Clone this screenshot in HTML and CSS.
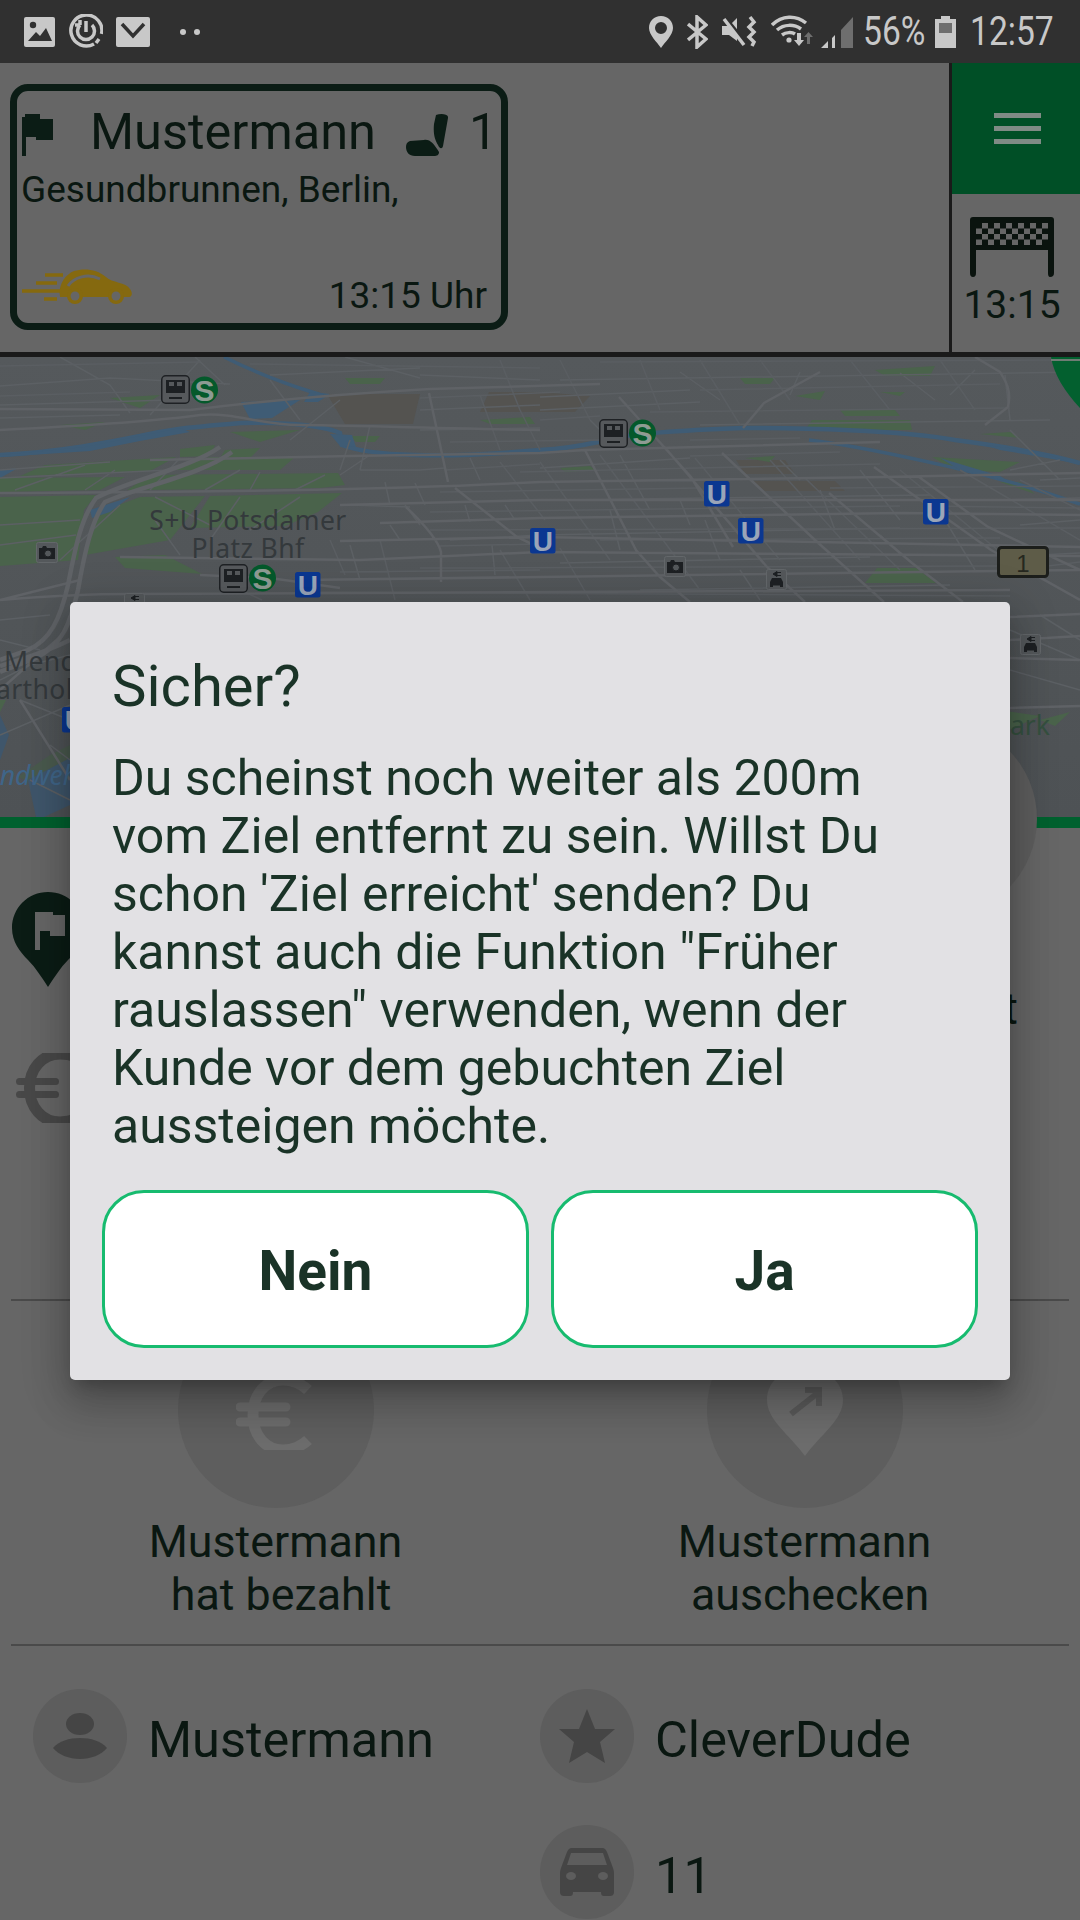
FILE: index.html
```html
<!DOCTYPE html>
<html lang="de">
<head>
<meta charset="utf-8">
<title>Sicher?</title>
<link rel="stylesheet" href="styles.css">
</head>
<body>
<div class="app">
  <div class="statusbar">
    <div class="status-left">
      <svg class="si" width="32" height="31" viewBox="0 0 32 31"><rect width="31" height="30" y="1" rx="2" class="f-status"/><circle cx="9" cy="9" r="3.2" class="f-bar"/><path d="M4 25 L12 16 L16 20 L22 12 L28 25 Z" class="f-bar"/></svg>
      <svg class="si" width="34" height="35" viewBox="0 0 34 35"><path d="M25 30 A15.500 15.500 0 1 1 32.500 20" class="s-status w3 nofill"/><path d="M30 25 L27 29" class="s-status w3"/><path d="M11 11 A8.500 8.500 0 1 0 23 11" class="s-status w3 nofill"/><path d="M17 7 V18 M11 11 H6 M11 11 V6" class="s-status w3"/></svg>
      <svg class="si" width="34" height="31" viewBox="0 0 34 31"><rect width="34" height="30" y="1" rx="2" class="f-status"/><path d="M6 8 L17 20 L28 8" class="s-bar w3"/></svg>
      <div class="dots"><i></i><i></i></div>
    </div>
    <div class="status-right">
      <svg width="24" height="32" viewBox="0 0 24 32"><path fill-rule="evenodd" d="M12 0 C5 0 0 5 0 12 C0 19 8 26 12 32 C16 26 24 19 24 12 C24 5 19 0 12 0 Z M12 6 A6 6 0 1 1 12 18 A6 6 0 1 1 12 6 Z" class="f-status"/></svg>
      <svg width="21" height="34" viewBox="0 0 21 34"><path d="M1 9 L19 24 L10 32 V2 L19 10 L1 25" class="s-status w3 nofill"/></svg>
      <svg width="35" height="33" viewBox="0 0 35 33"><path d="M0 11 H7 L15 3 V26 L7 20 H0 Z" class="f-status"/><path d="M2 1 L24 28" class="s-bar w3"/><path d="M2 4 L22 30" class="s-status w3"/><path d="M28 2 L32 7 L27 12 L32 17 L27 22 L32 27 L30 31" class="s-status w3 nofill"/></svg>
      <svg class="wifi" width="44" height="33" viewBox="0 0 44 33"><path d="M1 10 C11 0 25 0 35 8 M6 15 C13 9 23 9 30 14 M11 20 C15 17 21 17 24 19" class="s-status w3 nofill"/><circle cx="18" cy="25" r="2.6" class="f-status"/><path d="M26 18 H30 V25 H33 L28 31 L23 25 H26 Z" class="f-status"/><path d="M36 20 H39 V29 H36 Z M37.5 17 L42 22 H33 Z" class="f-dimicon"/></svg>
      <svg class="signal" width="32" height="32" viewBox="0 0 32 32"><path d="M0 32 L7 25 V32 Z M11 22 L14 19 V32 H11 Z" class="f-status"/><path d="M20 14 L32 1 V32 H20 Z" class="f-dimicon"/></svg>
      <span class="status-text pct">56%</span>
      <svg width="21" height="32" viewBox="0 0 21 32"><path fill-rule="evenodd" d="M6 0 H15 V3 H21 V32 H0 V3 H6 Z M4 7 V17 H17 V7 Z" class="f-status"/><rect x="4" y="7" width="13" height="10" class="f-dimicon"/></svg>
      <span class="status-text clock">12:57</span>
    </div>
  </div>

  <header class="topbar">
    <section class="card">
      <div class="card-head">
        <svg class="flag" width="32" height="42" viewBox="0 0 32 42"><path d="M0 3 H3 V0 H18 V5 H31 V26 H14 V23 H4 V42 H0 Z" class="f-ink"/></svg>
        <span class="card-name">Mustermann</span>
        <svg class="seat" width="42" height="42" viewBox="0 0 42 42"><path d="M30 1 C35 -1 43 0 42 4 L37 32 C36 36 33 34 32 31 C29 26 27 20 28 10 Z" class="f-ink"/><path d="M4 27 L18 26 C24 25 28 30 33 38 C33 41 31 42 28 42 H9 C3 42 0 38 0 33 C0 30 1 28 4 27 Z" class="f-ink"/></svg>
        <span class="card-count">1</span>
      </div>
      <div class="card-address">Gesundbrunnen, Berlin,</div>
      <div class="card-foot">
        <svg width="110" height="36" viewBox="0 0 110 36"><path d="M23 6 H41 M14 14 H35 M0 22 H38 M22 30 H35" class="s-gold w3 nofill"/><path d="M38 27 C36 18 42 6 52 2 C62 -1 75 0 84 8 C90 14 104 13 108 20 C111 24 110 28 107 28 H38 Z" class="f-gold"/><path d="M46 17 C52 8 66 4 78 10" class="s-paint nofill"/><circle cx="53" cy="27" r="8" class="f-gold"/><circle cx="53" cy="27" r="4.500" class="f-card"/><circle cx="94" cy="27" r="8" class="f-gold"/><circle cx="94" cy="27" r="4.500" class="f-card"/></svg>
        <span class="card-time">13:15 Uhr</span>
      </div>
    </section>
    <aside class="side">
      <div class="menu"><i></i><i></i><i></i></div>
      <div class="finish">
        <svg width="84" height="60" viewBox="0 0 84 60"><path d="M3 0 H81 Q84 0 84 3 V56 Q84 60 80 60 Q78 60 78 56 V33 H6 V56 Q6 60 3 60 Q0 60 0 56 V3 Q0 0 3 0 Z" class="f-ink-dark"/><path d="M6 6 H78 V28 H6 Z" class="f-card"/><path d="M6 6h6v5.5h-6z M18 6h6v5.500h-6z M30 6h6v5.500h-6z M42 6h6v5.500h-6z M54 6h6v5.500h-6z M66 6h6v5.500h-6z M12 11.500h6v5.500h-6z M24 11.500h6v5.500h-6z M36 11.500h6v5.500h-6z M48 11.500h6v5.500h-6z M60 11.500h6v5.500h-6z M72 11.500h6v5.500h-6z M6 17h6v5.500h-6z M18 17h6v5.500h-6z M30 17h6v5.500h-6z M42 17h6v5.500h-6z M54 17h6v5.500h-6z M66 17h6v5.500h-6z M12 22.500h6v5.500h-6z M24 22.500h6v5.500h-6z M36 22.500h6v5.500h-6z M48 22.500h6v5.500h-6z M60 22.500h6v5.500h-6z M72 22.500h6v5.500h-6z" class="f-ink-dark"/></svg>
        <span class="finish-time">13:15</span>
      </div>
    </aside>
  </header>

  <div class="map">
    <svg width="1080" height="460" viewBox="0 357 1080 460">
      <defs>
        <linearGradient id="mapshade" x1="0" y1="0" x2="0" y2="1"><stop offset="0" stop-color="#55595c"/><stop offset="1" stop-color="#4e5255"/></linearGradient>
      </defs>
      <rect x="0" y="357" width="1080" height="460" fill="url(#mapshade)"/>
      <!-- built-up tint -->
      <path d="M327 394 H420 L413 424 H345 Z M489 392 H540 L590 396 L575 412 H480 Z M736 460 H785 L795 474 H745 Z M753 481 H835 L845 491 H765 Z" class="m-tint"/>
      <!-- parks -->
      <path d="M45 465 L176 457 L150 471 L20 476 Z M170 470 L210 457 L295 457 L280 470 Z M0 478 L125 477 L100 490 L0 492 Z M0 497 L96 495 L84 510 L78 560 L0 566 Z M127 490 L150 475 L338 473 L345 485 L320 488 L135 490 Z M210 496 L342 493 L318 512 L285 526 L190 528 Z M100 512 L140 497 L205 496 L170 540 L85 555 Z M115 557 L165 555 L202 574 L125 568 Z M180 449 L215 445 L210 456 L180 457 Z M225 450 L260 448 L250 458 L220 458 Z M230 432 L300 430 L260 442 Z M350 436 L380 436 L375 442 L356 442 Z M345 378 L385 378 L380 384 L350 384 Z M110 398 L160 395 L140 408 Z M60 425 L105 422 L85 430 Z M480 420 L530 417 L535 424 L490 424 Z M740 378 L775 378 L770 384 L745 384 Z M795 396 L825 391 L820 400 Z M812 420 L910 420 L912 430 L805 430 Z M840 410 L895 410 L900 416 L845 416 Z M880 392 L905 392 L900 396 Z M875 370 L935 366 L930 376 L885 376 Z M745 458 L775 456 L770 462 Z M560 468 L590 466 L595 470 L565 472 Z M932 457 L1020 462 L1000 472 L955 470 Z M980 434 L1010 432 L1020 438 Z M1000 482 L1020 482 L1035 494 Z M877 568 L916 568 L936 583 L865 583 Z M1040 720 L1070 712 L1055 726 Z M985 708 L1040 716 L1000 734 Z M0 700 L6 700 L0 712 Z" class="m-park"/>
      <path d="M18 777 L50 755 L70 745 V760 L38 785 Z" class="m-park-soft"/>
      <!-- water -->
      <path d="M0 455 C60 452 110 442 140 436 C165 430 180 428 241 423 C275 422 320 424 340 433 L342 445 C370 456 440 459 540 450 C560 449 580 446 598 442 C625 433 690 430 743 428 C800 428 900 430 955 440 C1000 446 1045 453 1080 463" class="m-water"/>
      <path d="M0 455 L85 447 L140 436 L180 428 L190 432 L140 441 L90 451 L0 457 Z M330 434 L352 435 L356 447 L340 446 Z" class="m-water-fill"/>
      <path d="M809 440 C860 446 920 460 955 468 C990 476 1040 490 1080 504" class="m-water-thin"/>
      <path d="M940 458 L1000 476 L1010 482 L960 470 Z M985 445 L1040 452 L1070 462 L1000 450 Z" class="m-water-fill"/>
      <path d="M224 357 C250 370 280 382 312 392 L325 396" class="m-water-thin"/>
      <path d="M241 402 L300 400 L272 418 L250 419 Z M310 392 L330 394 L318 402 L304 402 Z M90 510 L130 497 L110 512 L92 518 Z M0 470 L18 468 L0 478 Z" class="m-water-fill"/>
      <path d="M0 715 L9 735 L0 760 Z M28 780 L70 758 V805 L44 817 H36 Z" class="m-water-fill soft"/>
      <!-- minor roads -->
      <path d="M0 386 L110 378 L230 384 M60 357 L110 385 L130 413 M0 405 L170 400 M195 357 L225 385 M0 418 L120 415 M270 375 L420 368 M420 375 L540 380 M345 357 L420 378 M0 470 L110 462 M0 478 L170 470 M15 490 L85 465 M85 490 L115 470 M150 490 L180 458 M205 490 L240 470 M250 490 L260 472 M295 490 L325 475 M155 497 L210 525 M240 497 L210 540 M300 497 L250 530 M120 505 L60 560 M155 520 L180 555 M270 380 L300 420 M200 360 L150 415 M340 400 L290 440 M340 470 L350 440 M370 425 L360 470 M420 410 L540 405 M420 430 L540 428 M0 525 L80 520 M0 545 L76 535 M350 505 L410 507 M360 470 L420 470 L445 468 M370 455 L340 475 M470 458 L480 480 M405 505 L420 525 M385 482 L390 505 M415 483 L425 505 M465 505 L470 522 M350 545 L360 580 M390 525 L400 540 M450 540 L540 535 M505 505 L515 520 M492 545 L495 575 M540 397 L690 390 M560 380 L1080 372 M540 410 L700 402 M540 468 L690 458 M700 425 L1050 420 M560 500 L930 495 M540 535 L900 528 M560 563 L870 557 M640 590 L950 585 M590 420 L605 435 M620 455 L650 510 M610 510 L620 550 M680 500 L690 525 M705 520 L720 560 M740 570 L760 600 M820 490 L835 530 M860 470 L900 520 M780 460 L800 480 M880 535 L920 570 M945 520 L975 570 M680 372 L720 400 M800 372 L790 395 M900 373 L935 400 M1005 375 L1010 420 M1010 430 L1060 480 M1000 500 L1080 498 M1020 525 L1080 520 M1040 555 L1080 553 M975 370 L950 395 M1010 470 L1060 460 M1040 480 L1080 478 M1010 630 L1080 660 M1010 670 L1080 690 M1040 615 L1080 640 M0 620 L50 615 M0 640 L40 650 M0 680 L30 665 L70 655 M20 700 L70 720 M0 735 L70 705 M50 745 L70 760 M30 780 L70 800" class="m-road-thin"/>
      <path d="M0 366 L200 362 M250 364 L540 368 M600 362 L1050 360 M0 396 L130 392 M420 398 L560 392 M700 390 L1000 384 M540 420 L600 416 M650 412 L1010 408 M450 442 L600 440 M690 440 L800 438 M445 470 L540 464 M690 456 L840 452 M520 472 L880 464 M440 492 L700 488 M830 488 L1080 486 M430 512 L900 506 M930 506 L1080 508 M430 530 L1080 528 M440 546 L540 544 M600 540 L1000 538 M420 568 L1000 566 M340 572 L540 570 M1000 572 L1080 562 M300 592 L1010 596 M500 360 L520 410 M560 360 L590 420 M640 360 L660 410 M700 360 L740 425 M760 360 L790 400 M850 360 L890 410 M940 360 L975 410 M480 395 L500 450 M520 410 L540 450 M500 462 L545 520 M540 462 L610 560 M600 455 L700 590 M695 458 L780 560 M770 460 L860 560 M805 478 L900 570 M900 470 L1010 560 M960 470 L1080 540 M1020 480 L1080 510 M560 548 L590 600 M500 550 L530 600 M380 540 L395 600 M330 540 L345 575 M240 590 L262 600" class="m-road-faint"/>
      <!-- main roads -->
      <path d="M0 430 C80 426 150 422 200 415 C235 412 260 425 300 425 C340 425 420 428 540 430 M0 409 L190 410 C230 405 320 395 430 389 L600 384 M0 493 C130 492 350 492 540 482 L884 477 L1080 473 M150 460 L350 456 L540 453 L585 450 L880 442 M340 505 L540 500 L1080 500 M380 523 L540 518 L900 513 L1080 515 M340 541 L540 537 L1080 547 M120 557 L360 560 L540 552 L1080 556 M300 580 L540 577 L1080 570 M0 600 C50 596 100 594 130 594 L1010 590 M1010 617 L1080 614 M1010 640 L1080 636 M1010 658 L1080 660 M1010 708 L1080 706 M429 393 L448 482 M406 507 C425 525 438 540 441 552 L441 582 M455 488 L517 537 L540 548 M619 397 L691 477 L733 547 M585 450 L636 550 L660 577 L690 602 M667 450 L767 567 L805 602 M722 453 L815 540 L884 602 M829 493 L912 563 L963 602 M874 467 L991 550 L1080 600 M919 477 L988 527 L1080 570 M743 428 L764 403 L820 372 M1008 407 C1012 390 1005 380 1000 372 L975 357 M1008 407 L985 425 M200 575 L270 578 L340 588 M0 600 L80 580 M60 637 L0 690 M20 700 L70 780" class="m-road"/>
      <path d="M220 447 C190 468 130 480 96 498 C80 520 75 550 68 585 C60 620 50 640 28 650 L0 660 M232 452 C200 476 140 486 105 502 C92 520 85 550 78 590 C70 625 62 645 36 658 L0 672 M0 666 C20 660 50 650 70 640" class="m-road-main"/>
      <path d="M1072 357 L1080 370" class="m-road"/>
      <!-- labels -->
      <text x="248" y="530" class="m-label" text-anchor="middle">S+U Potsdamer</text>
      <text x="248" y="558" class="m-label" text-anchor="middle">Platz Bhf</text>
      <text x="4" y="671" class="m-label">Mend</text>
      <text x="-4" y="699" class="m-label">arthol</text>
      <text x="1010" y="735" class="m-label-park">ark</text>
      <text x="-28" y="785" class="m-label-water">Landwehr</text>
      <!-- stations -->
      <g transform="translate(161 375)"><rect x=".75" y=".75" width="27.500" height="27.500" rx="4" class="m-station"/><path d="M5 5 H24 V18 H5 Z" class="m-glyph"/><path d="M8 7 H13 V11 H8 Z M16 7 H21 V11 H16 Z" class="m-station-f"/><path d="M8 22 H21 V24 H8 Z" class="m-glyph"/></g>
      <g transform="translate(219 564)"><rect x=".75" y=".75" width="27.500" height="27.500" rx="4" class="m-station"/><path d="M5 5 H24 V18 H5 Z" class="m-glyph"/><path d="M8 7 H13 V11 H8 Z M16 7 H21 V11 H16 Z" class="m-station-f"/><path d="M8 22 H21 V24 H8 Z" class="m-glyph"/></g>
      <g transform="translate(599 419)"><rect x=".75" y=".75" width="27.500" height="27.500" rx="4" class="m-station"/><path d="M5 5 H24 V18 H5 Z" class="m-glyph"/><path d="M8 7 H13 V11 H8 Z M16 7 H21 V11 H16 Z" class="m-station-f"/><path d="M8 22 H21 V24 H8 Z" class="m-glyph"/></g>
      <g><circle cx="204.500" cy="390" r="13.500" class="m-s"/><text x="204.500" y="400.500" class="m-s-t" text-anchor="middle">S</text></g>
      <g><circle cx="262.500" cy="578" r="13.500" class="m-s"/><text x="262.500" y="588.500" class="m-s-t" text-anchor="middle">S</text></g>
      <g><circle cx="642.500" cy="433" r="13.500" class="m-s"/><text x="642.500" y="443.500" class="m-s-t" text-anchor="middle">S</text></g>
      <!-- U -->
      <g class="u" transform="translate(295 572)"><rect width="25.500" height="25.500" rx="2.500" class="m-u"/><text x="12.750" y="23" class="m-u-t" text-anchor="middle">U</text></g>
      <g class="u" transform="translate(704 481)"><rect width="25.500" height="25.500" rx="2.500" class="m-u"/><text x="12.750" y="23" class="m-u-t" text-anchor="middle">U</text></g>
      <g class="u" transform="translate(738 518)"><rect width="25.500" height="25.500" rx="2.500" class="m-u"/><text x="12.750" y="23" class="m-u-t" text-anchor="middle">U</text></g>
      <g class="u" transform="translate(923 499)"><rect width="25.500" height="25.500" rx="2.500" class="m-u"/><text x="12.750" y="23" class="m-u-t" text-anchor="middle">U</text></g>
      <g class="u" transform="translate(530 528)"><rect width="25.500" height="25.500" rx="2.500" class="m-u"/><text x="12.750" y="23" class="m-u-t" text-anchor="middle">U</text></g>
      <g class="u" transform="translate(62 707)"><rect width="25.500" height="25.500" rx="2.500" class="m-u"/><text x="12.750" y="23" class="m-u-t" text-anchor="middle">U</text></g>
      <!-- cameras -->
      <g transform="translate(36 542)"><rect x=".5" y=".5" width="21" height="20" rx="2" class="m-poi"/><path d="M3 6 H6 L7 4 H10 L11 6 H19 V17 H3 Z" class="m-glyph"/><circle cx="12" cy="11.500" r="3.500" class="m-poi-hole"/></g>
      <g transform="translate(664 556)"><rect x=".5" y=".5" width="21" height="20" rx="2" class="m-poi"/><path d="M3 6 H6 L7 4 H10 L11 6 H19 V17 H3 Z" class="m-glyph"/><circle cx="12" cy="11.500" r="3.500" class="m-poi-hole"/></g>
      <!-- chargers -->
      <g transform="translate(766 569)"><rect x=".5" y=".5" width="20" height="20" rx="2" class="m-poi"/><path d="M7 5 L11 2.500 V7.500 Z M11 3.500 H15 M11 6.500 H15" class="m-glyph-line"/><path d="M6 9 H15 L17 13 V18 H14 V16.500 H7 V18 H4 V13 Z" class="m-glyph"/></g>
      <g transform="translate(1020 634)"><rect x=".5" y=".5" width="20" height="20" rx="2" class="m-poi"/><path d="M7 5 L11 2.500 V7.500 Z M11 3.500 H15 M11 6.500 H15" class="m-glyph-line"/><path d="M6 9 H15 L17 13 V18 H14 V16.500 H7 V18 H4 V13 Z" class="m-glyph"/></g>
      <g transform="translate(124 593)"><rect x=".5" y=".5" width="20" height="20" rx="2" class="m-poi"/><path d="M7 5 L11 2.500 V7.500 Z M11 3.500 H15 M11 6.500 H15" class="m-glyph-line"/></g>
      <!-- road badge -->
      <g transform="translate(997 546)"><rect x="1.500" y="1.500" width="49" height="29" rx="3" class="m-shield"/><text x="26" y="26" class="m-shield-t" text-anchor="middle">1</text></g>
      <!-- marker at the edge -->
      <path d="M1051 357 H1080 V408 C1065 392 1054 375 1051 357 Z" class="m-marker"/>
      <path d="M1051 360 H1080" class="m-marker-line"/>
    </svg>
  </div>
  <div class="route-bar"></div>

  <main class="content">
    <section class="trip">
      <div class="trip-icons">
        <svg class="trip-pin" width="72" height="95" viewBox="0 0 72 95"><path d="M36 0 C16 0 0 16 0 36 C0 50 8 60 16 68 C24 76 30 86 36 95 C42 86 48 76 56 68 C64 60 72 50 72 36 C72 16 56 0 36 0 Z" class="f-ink"/><path d="M23 20 H41 V23 H53 V44 H38 V39 H28 V58 H23 Z" class="f-body"/></svg>
        <svg class="trip-euro" width="84" height="70" viewBox="0 0 84 70"><path d="M74 12 C66 4 56 1 46 1 C28 1 15.500 16 15.500 35 C15.500 54 28 69 46 69 C56 69 66 66 74 58" class="s-euro nofill"/><path d="M5.500 28.500 H41.500 M5.500 41.500 H41.500" class="s-euro-bar"/></svg>
      </div>
      <span class="trip-label">Ziel erreicht</span>
    </section>

    <section class="actions">
      <div class="action">
        <div class="action-circle">
          <svg class="euro-mark" width="76" height="70" viewBox="0 0 76 70"><path d="M72 10 C66 4 56 0 47 0 C30 0 17 14 17 35 C17 56 30 70 47 70 C56 70 66 66 72 60" class="s-white w11 nofill"/><path d="M4 27 H50 M4 42 H50" class="s-white w9 round"/></svg>
        </div>
        <p class="action-label">Mustermann<br>&nbsp;hat bezahlt</p>
      </div>
      <div class="action">
        <div class="action-circle">
          <svg class="pin-out" width="76" height="90" viewBox="0 0 76 90"><path d="M38 0 C15 0 0 14 0 32 C0 52 22 66 38 88 C54 66 76 52 76 32 C76 14 60 0 38 0 Z" class="f-white"/><path d="M24 46 L52 24 M38 22 H52 V38" class="s-circle w6 nofill"/></svg>
        </div>
        <p class="action-label">Mustermann<br>&nbsp;auschecken</p>
      </div>
    </section>

    <section class="info">
      <div class="info-item">
        <div class="info-circle"><svg width="54" height="46" viewBox="0 0 54 46"><ellipse cx="27" cy="11" rx="14" ry="11" class="f-icon"/><path d="M0 35 C6 28 16 25 27 25 C38 25 48 28 54 35 C48 42 38 46 27 46 C16 46 6 42 0 35 Z" class="f-icon"/></svg></div>
        <span class="info-text">Mustermann</span>
      </div>
      <div class="info-item">
        <div class="info-circle"><svg width="56" height="54" viewBox="0 0 56 54"><path d="M28 0 L36 20 L56 20 L41 33 L46 54 L28 43 L10 54 L15 33 L0 20 L20 20 Z" class="f-icon"/></svg></div>
        <span class="info-text">CleverDude</span>
      </div>
      <div class="info-item info-second">
        <div class="info-circle"><svg width="54" height="48" viewBox="0 0 54 48"><path d="M12 0 H42 C45 0 46 2 47 4 L53 20 C54 23 54 24 54 27 V44 C54 47 52 48 50 48 H44 C42 48 41 47 41 44 H13 C13 47 12 48 10 48 H4 C2 48 0 47 0 44 V27 C0 24 0 23 1 20 L7 4 C8 2 9 0 12 0 Z" class="f-icon"/><path d="M11 5 H43 L47 17 H7 Z" class="f-circle"/><ellipse cx="11" cy="28" rx="5" ry="4" class="f-circle"/><ellipse cx="43" cy="28" rx="5" ry="4" class="f-circle"/></svg></div>
        <span class="info-text">11</span>
      </div>
    </section>
  </main>

  <div class="float-circle"></div>

  <div class="dialog" role="dialog">
    <h1 class="dialog-title">Sicher?</h1>
    <p class="dialog-body">Du scheinst noch weiter als 200m vom Ziel entfernt zu sein. Willst Du schon 'Ziel erreicht' senden? Du kannst auch die Funktion "Früher rauslassen" verwenden, wenn der Kunde vor dem gebuchten Ziel aussteigen möchte.</p>
    <div class="dialog-actions">
      <button class="dialog-btn">Nein</button>
      <button class="dialog-btn">Ja</button>
    </div>
  </div>
</div>
</body>
</html>
```

FILE: styles.css
```css
* { box-sizing: border-box; }
html, body { margin: 0; padding: 0; height: 1920px; overflow: hidden; background: #666; }
body { font-family: Roboto, "Liberation Sans", sans-serif; color: #0a1711; }
p, h1 { margin: 0; font-weight: 400; }

.app { position: relative; width: 1080px; height: 1920px; overflow: hidden; background: #666; }

/* status bar */
.statusbar { height: 63px; background: #303030; display: flex; justify-content: space-between; align-items: center; padding: 0 26px 0 24px; }
.status-left { display: flex; align-items: center; gap: 13px; }
.dots { display: flex; gap: 8px; margin-left: 17px; }
.dots i { width: 6px; height: 6px; border-radius: 50%; background: #c8c8c8; }
.status-right { display: flex; align-items: center; gap: 14px; }
.wifi { margin-right: -8px; }
.signal { margin-right: -4px; }
.status-text { display: block; font-size: 40px; line-height: 63px; color: #c8c8c8; white-space: nowrap; transform: scaleX(.84); transform-origin: left center; }
.pct { width: 58px; }
.clock { width: 84px; }
.f-status { fill: #c8c8c8; }
.f-bar { fill: #303030; }
.f-dimicon { fill: #6e6e6e; }
.s-status { stroke: #c8c8c8; fill: none; }
.s-bar { stroke: #303030; fill: none; }
.w3 { stroke-width: 3.5px; }
.w6 { stroke-width: 6px; }
.w9 { stroke-width: 9px; }
.w11 { stroke-width: 11px; }
.round { stroke-linecap: round; }
.nofill { fill: none; }

/* top bar */
.topbar { height: 294px; display: flex; justify-content: space-between; background: #666; border-bottom: 5px solid #1a1a1a; }
.card { margin: 21px 0 0 10px; width: 498px; height: 246px; border: 7px solid #0b1c15; border-radius: 18px; padding: 12px 12px 5px 5px; display: flex; flex-direction: column; }
.card-head { display: flex; align-items: center; height: 58px; }
.flag { flex: none; margin-top: 5px; }
.card-name { font-size: 50.500px; line-height: 58px; margin-left: 36px; }
.seat { flex: none; margin: 5px 0 0 30px; }
.card-count { font-size: 50.500px; line-height: 58px; margin-left: 21px; }
.card-address { font-size: 37px; line-height: 44px; margin-top: 7px; margin-left: -1px; }
.card-foot { margin-top: auto; display: flex; justify-content: space-between; align-items: flex-start; height: 44px; padding-right: 2px; }
.card-foot svg { margin-top: -5px; }
.card-time { font-size: 37px; line-height: 44px; }
.f-ink { fill: #0b1c15; }
.f-ink-dark { fill: #0a130e; }
.f-gold { fill: #85690f; }
.s-gold { stroke: #85690f; }
.s-paint { stroke: #666; stroke-width: 3px; }
.f-card { fill: #666; }

.side { width: 131px; border-left: 3px solid #1a1a1a; display: flex; flex-direction: column; }
.menu { height: 131px; background: #004f26; display: flex; flex-direction: column; justify-content: center; align-items: flex-end; gap: 8px; padding-right: 39px; }
.menu i { display: block; width: 47px; height: 5px; background: #7f8b85; }
.finish { display: flex; flex-direction: column; align-items: center; padding-top: 23px; padding-right: 8px; }
.finish-time { font-size: 39px; line-height: 48px; margin-top: 4px; }

/* map */
.map { height: 460px; overflow: hidden; background: #4f5458; }
.map svg { display: block; }
.m-tint { fill: #545350; }
.m-park { fill: #4a634b; }
.m-park-soft { fill: #4a5a4e; }
.m-water { fill: none; stroke: #3f5c75; stroke-width: 4.5px; }
.m-water-thin { fill: none; stroke: #3f5c75; stroke-width: 3.5px; }
.m-water-fill { fill: #3f5c75; }
.m-water-fill.soft { fill: #3f566b; }
.m-road-faint { fill: none; stroke: #5a5e62; stroke-width: 1.5px; }
.m-road-thin { fill: none; stroke: #5c6064; stroke-width: 1.5px; }
.m-road { fill: none; stroke: #5f6266; stroke-width: 2.5px; }
.m-road-main { fill: none; stroke: #606367; stroke-width: 4.5px; }
.m-label { font-family: "Noto Sans", sans-serif; font-size: 26.500px; fill: #34393c; letter-spacing: .4px; }
.m-label-park { font-family: "Noto Sans", sans-serif; font-size: 26.500px; fill: #35503f; }
.m-label-water { font-family: "Noto Sans", sans-serif; font-style: italic; font-size: 26.500px; fill: #3f6588; }
.m-station { fill: #56595c; stroke: #1e2124; stroke-width: 1.5px; }
.m-station-f { fill: #56595c; }
.m-glyph { fill: #1d2023; }
.m-glyph-line { fill: #1d2023; stroke: #1d2023; stroke-width: 1px; }
.m-s { fill: #04592b; }
.m-s-t { font-family: "Liberation Sans", sans-serif; font-weight: 700; font-size: 30px; fill: #8e9b93; }
.m-u { fill: #0b3791; }
.m-u-t { font-family: "Liberation Sans", sans-serif; font-weight: 700; font-size: 28px; fill: #9aa5b8; }
.m-poi { fill: #54585b; stroke: #63676a; stroke-width: 1px; }
.m-poi-hole { fill: #54585b; stroke: #1d2023; stroke-width: 1px; }
.m-shield { fill: #5e5c48; stroke: #1c1e1b; stroke-width: 3px; }
.m-shield-t { font-family: "Liberation Sans", sans-serif; font-size: 24px; fill: #26281f; }
.m-marker { fill: #03602f; }
.m-marker-line { stroke: #6f7c74; stroke-width: 2px; }

.route-bar { height: 11px; background: #00612f; }

/* content */
.content { padding: 0 11px; }
.trip { height: 471px; display: flex; justify-content: space-between; padding: 64px 51px 0 1px; }
.trip-icons { display: flex; flex-direction: column; }
.trip-pin { display: block; }
.trip-euro { display: block; margin-top: 66px; margin-left: 2px; }
.f-body { fill: #666; }
.s-euro { stroke: #484848; stroke-width: 11px; }
.s-euro-bar { stroke: #484848; stroke-width: 7px; stroke-linecap: round; fill: none; }
.trip-label { font-size: 44.800px; line-height: 53px; padding-top: 90px; }

.actions { height: 347px; border-top: 2px solid #4a4a4a; border-bottom: 2px solid #4a4a4a; display: grid; grid-template-columns: 1fr 1fr; padding-top: 11px; }
.action { display: flex; flex-direction: column; align-items: center; }
.action-circle { width: 196px; height: 196px; border-radius: 50%; background: #5e5e5e; display: flex; align-items: center; justify-content: center; }
.action-label { font-size: 44.800px; line-height: 53px; text-align: center; margin-top: 7px; }
.euro-mark { margin: 10px 4px 0 0; }
.pin-out { margin-top: 6px; }
.f-white { fill: #6c6c6c; }
.s-white { stroke: #6c6c6c; }
.s-circle { stroke: #5a5a5a; }

.info { display: grid; grid-template-columns: 507px 1fr; row-gap: 42px; padding: 43px 0 0 22px; }
.info-item { display: flex; align-items: center; gap: 21px; }
.info-second { grid-column: 2; }
.info-circle { flex: none; width: 94px; height: 94px; border-radius: 50%; background: #5d5d5d; display: flex; align-items: center; justify-content: center; }
.info-text { font-size: 50.500px; line-height: 58px; margin-top: 8px; }
.f-icon { fill: #454545; }
.f-circle { fill: #5d5d5d; }

.float-circle { position: absolute; left: 841px; top: 721px; width: 196px; height: 196px; border-radius: 50%; background: #5e5e5e; }

/* dialog */
.dialog { position: absolute; left: 70px; top: 602px; width: 940px; height: 778px; background: #e2e1e4; border-radius: 5px; padding: 0 32px; box-shadow: 0 24px 38px 3px rgba(0,0,0,.16), 0 9px 46px 8px rgba(0,0,0,.14), 0 11px 15px -7px rgba(0,0,0,.22); color: #1a3327; }
.dialog-title { font-size: 58px; line-height: 66px; padding: 51px 0 0 10px; }
.dialog-body { font-size: 50px; line-height: 58px; margin: 30px 0 0 10px; max-width: 777px; }
.dialog-actions { position: absolute; left: 32px; right: 32px; top: 588px; display: grid; grid-template-columns: 427px 427px; gap: 22px; }
.dialog-btn { height: 158px; background: #fff; border: 3px solid #17bb6f; border-radius: 42px; font-family: Roboto, "Liberation Sans", sans-serif; font-weight: 700; font-size: 55px; color: #1a3327; padding: 4px 0 0; }
```
